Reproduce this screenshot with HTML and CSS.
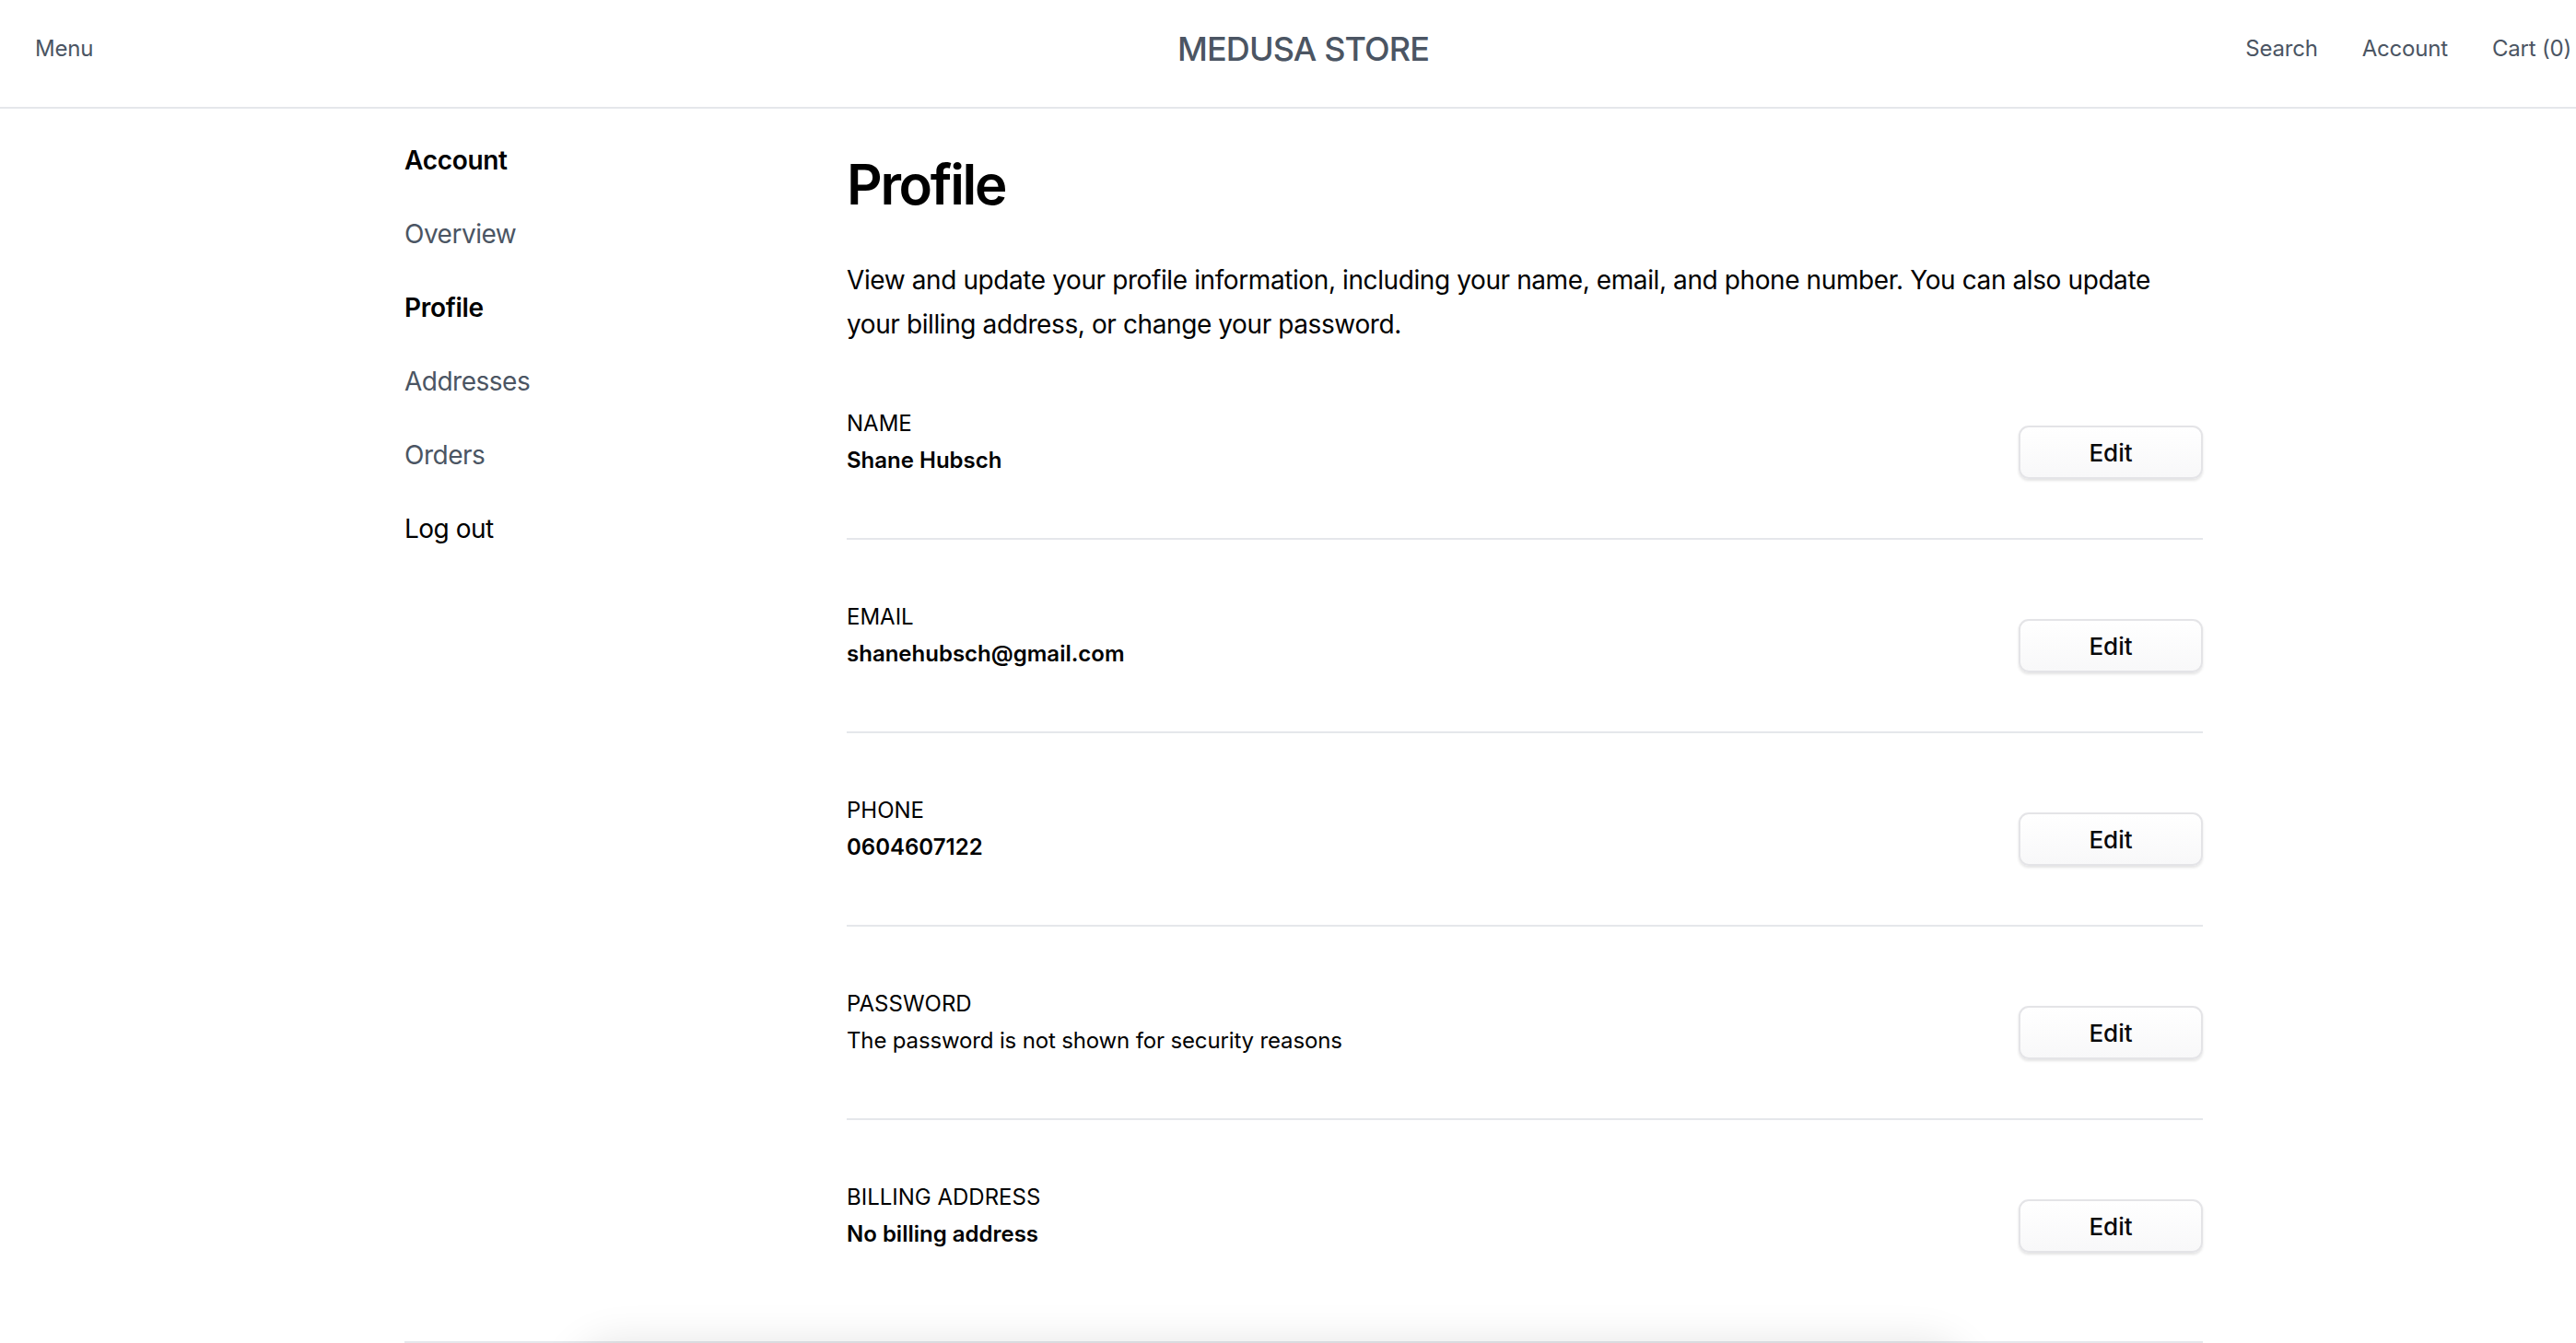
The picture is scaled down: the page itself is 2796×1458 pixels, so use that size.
FILE: index.html
```html
<!DOCTYPE html>
<html lang="en">
<head>
<meta charset="utf-8">
<title>Profile | Medusa Store</title>
<link rel="stylesheet" href="styles.css">
</head>
<body>
<header class="topbar">
  <nav class="topnav">
    <div class="nav-left"><a class="nav-link" href="#">Menu</a></div>
    <a class="brand" href="#">MEDUSA STORE</a>
    <div class="nav-right">
      <a class="nav-link" href="#">Search</a>
      <a class="nav-link" href="#">Account</a>
      <a class="nav-link" href="#">Cart (0)</a>
    </div>
  </nav>
</header>

<main class="account">
  <div class="account-grid">
    <aside class="account-nav">
      <h3 class="nav-title">Account</h3>
      <ul class="nav-list">
        <li><a class="side-link" href="#">Overview</a></li>
        <li><a class="side-link active" href="#">Profile</a></li>
        <li><a class="side-link" href="#">Addresses</a></li>
        <li><a class="side-link" href="#">Orders</a></li>
        <li><a class="side-link logout" href="#">Log out</a></li>
      </ul>
    </aside>

    <section class="profile">
      <div class="profile-head">
        <h1 class="title">Profile</h1>
        <p class="intro">View and update your profile information, including your name, email, and phone number. You can also update<br>your billing address, or change your password.</p>
      </div>

      <div class="rows">
        <div class="row">
          <div class="row-info"><span class="label">Name</span><span class="value">Shane Hubsch</span></div>
          <button class="btn" type="button">Edit</button>
        </div>
        <div class="divider"></div>
        <div class="row">
          <div class="row-info"><span class="label">Email</span><span class="value">shanehubsch@gmail.com</span></div>
          <button class="btn" type="button">Edit</button>
        </div>
        <div class="divider"></div>
        <div class="row">
          <div class="row-info"><span class="label">Phone</span><span class="value">0604607122</span></div>
          <button class="btn" type="button">Edit</button>
        </div>
        <div class="divider"></div>
        <div class="row">
          <div class="row-info"><span class="label">Password</span><span class="value plain">The password is not shown for security reasons</span></div>
          <button class="btn" type="button">Edit</button>
        </div>
        <div class="divider"></div>
        <div class="row">
          <div class="row-info"><span class="label">Billing address</span><span class="value">No billing address</span></div>
          <button class="btn" type="button">Edit</button>
        </div>
      </div>
    </section>
  </div>

  <div class="questions">
    <div class="float-shadow"></div>
  </div>
</main>
</body>
</html>
```

FILE: styles.css
```css
* { box-sizing: border-box; }

html, body {
  margin: 0;
  padding: 0;
  background: #ffffff;
}

body {
  font-family: Inter, "Noto Sans", "Liberation Sans", sans-serif;
  color: #000000;
  overflow: hidden;
}

a { text-decoration: none; color: inherit; }

/* ---------- header ---------- */
.topbar {
  height: 118px;
  border-bottom: 2px solid #e5e7eb;
  background: #ffffff;
}

.topnav {
  height: 105px;
  display: grid;
  grid-template-columns: 1fr auto 1fr;
  align-items: center;
  padding: 0 5px 0 38px;
  color: #4b5563;
  font-size: 24px;
  line-height: 40px;
}

.nav-link { letter-spacing: -0.2px; }

.nav-left { display: flex; }

.brand {
  font-size: 36px;
  line-height: 48px;
  font-weight: 500;
  letter-spacing: -0.9px;
  color: #4b5563;
}

.nav-right {
  display: flex;
  justify-content: flex-end;
  gap: 48px;
}

/* ---------- account layout ---------- */
.account {
  width: 1952px;
  margin-left: 439px;
}

.account-grid {
  display: grid;
  grid-template-columns: 480px 1fr;
  padding: 32px 0 96px;
}

.nav-title {
  margin: 0;
  padding-bottom: 32px;
  font-size: 28px;
  line-height: 48px;
  font-weight: 600;
  letter-spacing: -0.3px;
}

.nav-list {
  list-style: none;
  margin: 0;
  padding: 0;
  display: flex;
  flex-direction: column;
  gap: 32px;
}

.side-link {
  display: block;
  font-size: 28px;
  line-height: 48px;
  letter-spacing: -0.5px;
  color: #4b5563;
}

.side-link.active { color: #000000; font-weight: 600; letter-spacing: -0.3px; }
.side-link.logout { color: #000000; }

/* ---------- profile ---------- */
.profile { padding-top: 2px; }

.profile-head {
  display: flex;
  flex-direction: column;
  gap: 32px;
  margin-bottom: 64px;
}

.title {
  margin: 0;
  font-size: 60px;
  line-height: 96px;
  font-weight: 600;
  letter-spacing: -2.3px;
}

.intro {
  margin: 0;
  font-size: 28px;
  line-height: 48px;
  letter-spacing: -0.4px;
}

.rows {
  display: flex;
  flex-direction: column;
  gap: 64px;
}

.row {
  display: flex;
  justify-content: space-between;
  align-items: flex-end;
}

.row-info {
  display: flex;
  flex-direction: column;
  font-size: 24px;
  line-height: 40px;
}

.label { text-transform: uppercase; }
.value { font-weight: 600; }
.value.plain { font-weight: 400; letter-spacing: -0.15px; }

.divider {
  height: 2px;
  background: #e5e7eb;
}

.btn {
  width: 200px;
  height: 58px;
  border: 2px solid #e4e4e7;
  border-radius: 11px;
  background: linear-gradient(#ffffff, #f8f8f9);
  box-shadow: 0 2px 3px rgba(0, 0, 0, 0.11);
  font-family: Inter, "Noto Sans", "Liberation Sans", sans-serif;
  font-size: 26px;
  font-weight: 500;
  color: #09090b;
  padding: 0;
  cursor: pointer;
}

/* ---------- bottom section ---------- */
.questions {
  position: relative;
  border-top: 2px solid #e5e7eb;
  height: 200px;
}

.float-shadow {
  position: absolute;
  left: 190px;
  top: 4px;
  width: 1500px;
  height: 120px;
  border-radius: 40px;
  background: #ffffff;
  box-shadow: 0 0 45px 6px rgba(0, 0, 0, 0.10);
}
```
